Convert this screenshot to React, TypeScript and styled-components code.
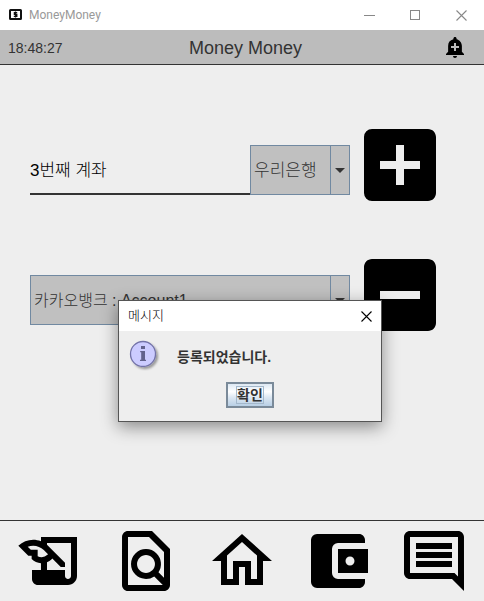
import React, { useState } from "react";
import styled, { createGlobalStyle } from "styled-components";
import {
  MdAccountBalanceWallet,
  MdAddAlert,
  MdAddBox,
  MdHistoryEdu,
  MdIndeterminateCheckBox,
  MdOutlineComment,
  MdOutlineFindInPage,
  MdOutlineHome,
} from "react-icons/md";

const GlobalStyle = createGlobalStyle`
  * { box-sizing: border-box; }
  body {
    margin: 0;
    background: #eeeeee;
    color: #333333;
    font-family: "Liberation Sans", "Noto Sans CJK KR", sans-serif;
  }
  button, input, select {
    margin: 0;
    padding: 0;
    border: 0;
    border-radius: 0;
    background: none;
    color: inherit;
    font: inherit;
    outline: none;
  }
  svg { display: block; flex: none; }
`;

const Window = styled.div`
  position: relative;
  display: flex;
  flex-direction: column;
  min-height: 100vh;
`;

const TitleBar = styled.div`
  display: flex;
  align-items: center;
  gap: 7px;
  height: 30px;
  padding-left: 9px;
  background: #ffffff;
`;

const WindowTitle = styled.span`
  flex: 1;
  color: #999999;
  font-family: Roboto, sans-serif;
  font-size: 12px;
  line-height: 16px;
`;

const WindowControls = styled.div`
  display: flex;
`;

const WindowButton = styled.button`
  display: flex;
  align-items: center;
  justify-content: center;
  width: 46px;
  height: 28px;
  color: #888888;
`;

const Header = styled.header`
  display: grid;
  grid-template-columns: 1fr auto 1fr;
  align-items: center;
  height: 35px;
  padding: 0 17px 0 8px;
  border-bottom: 1px solid #333333;
  background: #bcbcbc;
`;

const Clock = styled.time`
  padding-top: 2px;
  font-size: 14px;
  line-height: 20px;
`;

const AppTitle = styled.h1`
  margin: 0;
  padding: 2px 0 0 16px;
  font-size: 18px;
  font-weight: 400;
  line-height: 24px;
`;

const AlertButton = styled.button`
  justify-self: end;
  color: #000000;
`;

const Main = styled.main`
  display: flex;
  flex: 1;
  flex-direction: column;
  gap: 58px;
  padding: 64px 48px 0 30px;
`;

const FormRow = styled.form`
  display: flex;
  align-items: flex-end;
  gap: 14px;
`;

const Fields = styled.div`
  display: flex;
  flex: 1;
  min-width: 0;
  padding-bottom: 6px;
`;

const NameInput = styled.input`
  flex: 1;
  min-width: 0;
  height: 50px;
  padding-bottom: 2px;
  border-bottom: 2px solid #333333;
  color: #000000;
  font-size: 17px;
  font-weight: 300;
`;

const Combo = styled.div<{ $wide?: boolean }>`
  display: grid;
  grid-template-columns: 1fr 19px;
  flex: ${(p) => (p.$wide ? "1" : "0 0 100px")};
  height: 50px;
  border: 1px solid #7189a1;
  background: #c0c0c0;
`;

const ComboSelect = styled.select<{ $wide?: boolean }>`
  grid-area: 1 / 1 / 2 / 3;
  min-width: 0;
  padding-left: 3px;
  appearance: none;
  font-size: ${(p) => (p.$wide ? "16px" : "17px")};
  font-weight: 300;
`;

const ComboArrow = styled.span`
  grid-area: 1 / 2 / 2 / 3;
  display: flex;
  align-items: center;
  justify-content: center;
  border-left: 1px solid #7189a1;
  pointer-events: none;
`;

const SquareButton = styled.button`
  display: flex;
  align-items: center;
  justify-content: center;
  flex: none;
  width: 72px;
  height: 72px;
  color: #000000;
`;

const BottomNav = styled.nav`
  display: grid;
  grid-template-columns: repeat(5, 1fr);
  padding: 4px 2px;
  border-top: 1px solid #333333;
`;

const NavButton = styled.button`
  display: flex;
  justify-content: center;
  color: #000000;
`;

const Dialog = styled.section`
  position: absolute;
  top: 300px;
  left: calc(50% - 124px);
  width: 264px;
  border: 1px solid #555555;
  background: #eeeeee;
  box-shadow: 0 5px 16px rgba(0, 0, 0, 0.42);
`;

const DialogHeader = styled.div`
  display: flex;
  align-items: center;
  justify-content: space-between;
  height: 30px;
  padding-left: 9px;
  background: #ffffff;
  color: #000000;
`;

const DialogTitle = styled.h2`
  margin: 0;
  font-size: 13px;
  font-weight: 300;
  line-height: 20px;
`;

const DialogClose = styled.button`
  display: flex;
  align-items: center;
  justify-content: center;
  width: 30px;
  height: 28px;
`;

const DialogBody = styled.div`
  display: flex;
  align-items: center;
  gap: 16px;
  padding: 8px 10px 0;
`;

const Message = styled.p`
  margin: 0;
  padding-top: 4px;
  font-size: 14px;
  font-weight: 700;
  line-height: 20px;
`;

const DialogActions = styled.div`
  display: flex;
  justify-content: center;
  padding: 11px 0 13px;
`;

const OkButton = styled.button`
  display: flex;
  align-items: center;
  justify-content: center;
  width: 48px;
  height: 26px;
  border: 2px solid #7a8a99;
  background: linear-gradient(#dde8f3 0%, #ffffff 35%, #dde8f3 60%, #b8cfe5 100%);
`;

const FocusFrame = styled.span`
  border: 1px solid #a3b8cc;
  font-size: 14px;
  font-weight: 700;
  line-height: 16px;
`;

const AppIcon = () => (
  <svg width="13" height="13" viewBox="0 0 13 13" aria-hidden="true">
    <rect x="1" y="1" width="11" height="9" rx="0.5" fill="#fff" stroke="#111" strokeWidth="2" />
    <path d="M8.2 3.6H5.4v1.8h2.4v2H4.8M6.5 2.6v6" fill="none" stroke="#111" strokeWidth="1.3" />
  </svg>
);

const Arrow = () => (
  <svg width="10" height="5" viewBox="0 0 10 5" aria-hidden="true">
    <path d="M0 0H10L5 5Z" fill="#333" />
  </svg>
);

const Cross = () => (
  <svg width="11" height="11" viewBox="0 0 11 11" aria-hidden="true">
    <path d="M0.5 0.5L10.5 10.5M10.5 0.5L0.5 10.5" stroke="currentColor" strokeWidth="1.1" />
  </svg>
);

const InfoIcon = () => (
  <svg width="32" height="32" viewBox="0 0 32 32" aria-hidden="true">
    <defs>
      <filter id="info-shadow" x="-20%" y="-20%" width="150%" height="150%">
        <feDropShadow dx="2" dy="2" stdDeviation="1.2" floodColor="#000" floodOpacity="0.35" />
      </filter>
    </defs>
    <circle cx="14" cy="15" r="12.5" fill="#ccccff" stroke="#7373a8" strokeWidth="1.3" filter="url(#info-shadow)" />
    <path d="M12 7h4v3h-4zM11.2 12H16v8.8h1v1.2h-6v-1.2h1.2v-7.6h-1z" fill="#62628c" />
  </svg>
);

const navItems = [
  { label: "내역 작성", Icon: MdHistoryEdu },
  { label: "내역 조회", Icon: MdOutlineFindInPage },
  { label: "홈", Icon: MdOutlineHome },
  { label: "계좌", Icon: MdAccountBalanceWallet },
  { label: "메모", Icon: MdOutlineComment },
];

export default function App() {
  const [name, setName] = useState("3번째 계좌");
  const [open, setOpen] = useState(true);

  return (
    <Window>
      <GlobalStyle />
      <TitleBar>
        <AppIcon />
        <WindowTitle>MoneyMoney</WindowTitle>
        <WindowControls>
          <WindowButton type="button" aria-label="최소화">
            <svg width="11" height="11" viewBox="0 0 11 11">
              <path d="M0 5.5H11" stroke="currentColor" />
            </svg>
          </WindowButton>
          <WindowButton type="button" aria-label="최대화">
            <svg width="11" height="11" viewBox="0 0 11 11">
              <rect x="0.5" y="0.5" width="9" height="9" fill="none" stroke="currentColor" />
            </svg>
          </WindowButton>
          <WindowButton type="button" aria-label="닫기">
            <Cross />
          </WindowButton>
        </WindowControls>
      </TitleBar>
      <Header>
        <Clock>18:48:27</Clock>
        <AppTitle>Money Money</AppTitle>
        <AlertButton type="button" aria-label="알림 추가">
          <MdAddAlert size={24} />
        </AlertButton>
      </Header>
      <Main>
        <FormRow onSubmit={(e) => e.preventDefault()}>
          <Fields>
            <NameInput aria-label="계좌 이름" value={name} onChange={(e) => setName(e.target.value)} />
            <Combo>
              <ComboSelect aria-label="은행">
                <option>우리은행</option>
                <option>카카오뱅크</option>
              </ComboSelect>
              <ComboArrow>
                <Arrow />
              </ComboArrow>
            </Combo>
          </Fields>
          <SquareButton type="submit" aria-label="계좌 추가">
            <MdAddBox size={96} />
          </SquareButton>
        </FormRow>
        <FormRow onSubmit={(e) => e.preventDefault()}>
          <Fields>
            <Combo $wide>
              <ComboSelect $wide aria-label="삭제할 계좌">
                <option>카카오뱅크 : Account1</option>
              </ComboSelect>
              <ComboArrow>
                <Arrow />
              </ComboArrow>
            </Combo>
          </Fields>
          <SquareButton type="submit" aria-label="계좌 삭제">
            <MdIndeterminateCheckBox size={96} />
          </SquareButton>
        </FormRow>
      </Main>
      <BottomNav>
        {navItems.map(({ label, Icon }) => (
          <NavButton key={label} type="button" aria-label={label}>
            <Icon size={72} />
          </NavButton>
        ))}
      </BottomNav>
      {open && (
        <Dialog role="dialog" aria-labelledby="dialog-title">
          <DialogHeader>
            <DialogTitle id="dialog-title">메시지</DialogTitle>
            <DialogClose type="button" aria-label="닫기" onClick={() => setOpen(false)}>
              <Cross />
            </DialogClose>
          </DialogHeader>
          <DialogBody>
            <InfoIcon />
            <Message>등록되었습니다.</Message>
          </DialogBody>
          <DialogActions>
            <OkButton type="button" onClick={() => setOpen(false)}>
              <FocusFrame>확인</FocusFrame>
            </OkButton>
          </DialogActions>
        </Dialog>
      )}
    </Window>
  );
}
